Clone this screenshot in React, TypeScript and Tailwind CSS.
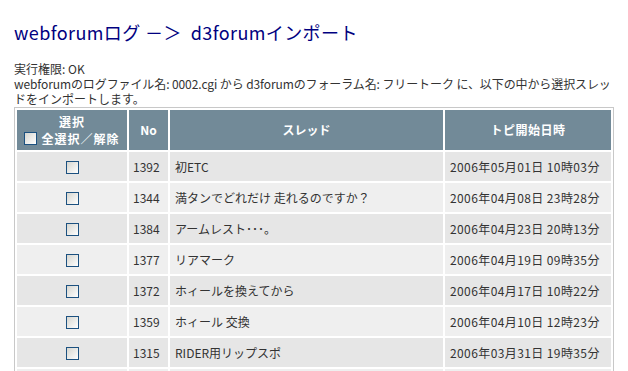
import React from "react";

const rows = [
  { no: "1392", title: "初ETC", date: "2006年05月01日 10時03分" },
  { no: "1344", title: "満タンでどれだけ 走れるのですか？", date: "2006年04月08日 23時28分" },
  { no: "1384", title: "アームレスト･･･。", date: "2006年04月23日 20時13分" },
  { no: "1377", title: "リアマーク", date: "2006年04月19日 09時35分" },
  { no: "1372", title: "ホィールを換えてから", date: "2006年04月17日 10時22分" },
  { no: "1359", title: "ホィール 交換", date: "2006年04月10日 12時23分" },
  { no: "1315", title: "RIDER用リップスポ", date: "2006年03月31日 19時35分" },
  { no: "", title: "", date: "" },
];

function Box() {
  return (
    <span className="inline-block w-[13px] h-[13px] border border-[#1c5180] bg-gradient-to-br from-[#d6d6d0] to-[#ffffff] align-middle" />
  );
}

export default function App() {
  return (
    <div
      className="w-[628px] h-[371px] overflow-hidden bg-white text-[#333333] pl-[14px]"
      style={{ fontFamily: '"Noto Sans CJK JP", "Noto Sans", sans-serif' }}
    >
      <h1 className="pt-[21px] text-[18px] leading-[22px] text-[#000080] font-normal tracking-[0.4px] whitespace-nowrap">
        {"webforumログ －＞\u00a0\u00a0d3forumインポート"}
      </h1>
      <div className="mt-[18px] w-[600px] text-[12px] leading-[15px]">
        <div>実行権限: OK</div>
        <div className="whitespace-nowrap tracking-[-0.1px]">
          webforumのログファイル名: 0002.cgi から d3forumのフォーラム名: フリートーク に、以下の中から選択スレッ
        </div>
        <div>ドをインポートします。</div>
      </div>
      <table className="mt-[1px] w-[600px] table-fixed border-separate border-spacing-[2px] border border-[#c8c8c8] text-[12px]">
        <colgroup>
          <col className="w-[110px]" />
          <col className="w-[39px]" />
          <col className="w-[273px]" />
          <col className="w-[166px]" />
        </colgroup>
        <thead>
          <tr className="h-[40px] bg-[#728a98] text-white font-bold">
            <th className="p-0 text-center leading-[15px]">
              <div className="tracking-[1px]">選択</div>
              <div className="flex items-center justify-center gap-[4px] mt-[2px]">
                <Box />
                <span className="tracking-[1px]">全選択／解除</span>
              </div>
            </th>
            <th className="p-0 text-center">No</th>
            <th className="p-0 text-center">スレッド</th>
            <th className="p-0 text-center tracking-[0.5px]">トピ開始日時</th>
          </tr>
        </thead>
        <tbody>
          {rows.map((r, i) => (
            <tr key={i} className={`h-[29px] ${i % 2 === 0 ? "bg-[#e6e6e6]" : "bg-[#efefef]"}`}>
              <td className="p-0 text-center leading-none">
                <Box />
              </td>
              <td className="py-0 pl-[4px] whitespace-nowrap">{r.no}</td>
              <td className="py-0 pl-[5px] whitespace-nowrap">{r.title}</td>
              <td className="py-0 pl-[5px] whitespace-nowrap tracking-[0.4px]">{r.date}</td>
            </tr>
          ))}
        </tbody>
      </table>
    </div>
  );
}
